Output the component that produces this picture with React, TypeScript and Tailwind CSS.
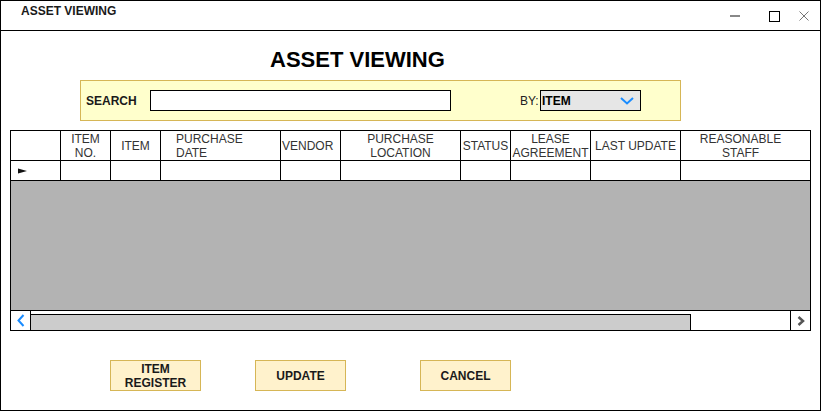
import React from "react";

const columns = [
  { w: "w-[50px]", label: [""], align: "items-center" },
  { w: "w-[50px]", label: ["ITEM", "NO."], align: "items-center" },
  { w: "w-[50px]", label: ["ITEM"], align: "items-center" },
  { w: "w-[120px]", label: ["PURCHASE", "DATE"], align: "items-start pl-[15px]" },
  { w: "w-[60px]", label: ["VENDOR"], align: "items-start pl-[1px]" },
  { w: "w-[120px]", label: ["PURCHASE", "LOCATION"], align: "items-center" },
  { w: "w-[50px]", label: ["STATUS"], align: "items-center" },
  { w: "w-[80px]", label: ["LEASE", "AGREEMENT"], align: "items-center" },
  { w: "w-[90px]", label: ["LAST UPDATE"], align: "items-center" },
  { w: "w-[129px]", label: ["REASONABLE", "STAFF"], align: "items-center pr-[10px]" },
];

function ActionButton({ lines, className }: { lines: string[]; className: string }) {
  return (
    <button
      className={`h-[31px] w-[91px] border border-[#d6b656] bg-[#fff2cc] text-[12px] font-bold leading-[14px] text-[#1a1a1a] flex flex-col items-center justify-center ${className}`}
    >
      {lines.map((l) => (
        <span key={l}>{l}</span>
      ))}
    </button>
  );
}

export default function App() {
  return (
    <div className="w-[821px] h-[411px] border border-black bg-white flex flex-col font-['Liberation_Sans',Arial,sans-serif] text-black">
      {/* title bar */}
      <div className="h-[30px] shrink-0 border-b border-black flex items-start">
        <span className="ml-[20px] pt-[3px] text-[12px] leading-[14px] font-bold text-[#1a1a1a]">ASSET VIEWING</span>
        <div className="ml-auto mt-[9px] flex items-start">
          <svg width="12" height="12" viewBox="0 0 12 12" className="mr-[27px]">
            <line x1="1" y1="6" x2="11" y2="6" stroke="#888" strokeWidth="2" />
          </svg>
          <svg width="12" height="12" viewBox="0 0 12 12" className="mr-[18px]">
            <rect x="1.5" y="1.5" width="10" height="10" fill="none" stroke="#000" strokeWidth="1" />
          </svg>
          <svg width="12" height="12" viewBox="0 0 12 12" className="mr-[10px]">
            <path d="M1.5 1.5 L10.5 10.5 M10.5 1.5 L1.5 10.5" stroke="#777" strokeWidth="1" />
          </svg>
        </div>
      </div>

      {/* heading */}
      <h1 className="mt-[17px] ml-[269px] text-[22px] leading-[24px] font-bold">ASSET VIEWING</h1>

      {/* search panel */}
      <div className="mt-[8px] ml-[79px] w-[601px] h-[41px] border border-[#d6b656] bg-[#ffffcc] flex items-center pl-[5px]">
        <span className="w-[64px] text-[12px] font-bold text-[#1a1a1a]">SEARCH</span>
        <input className="w-[301px] h-[21px] border border-black bg-white outline-none" />
        <span className="ml-[69px] w-[20px] text-[12px] text-[#222]">BY:</span>
        <div className="w-[101px] h-[21px] border border-black bg-[#e6e6e6] flex items-center pl-[1px]">
          <span className="text-[12px] font-bold">ITEM</span>
          <svg width="14" height="8" viewBox="0 0 14 8" className="ml-auto mr-[6px]">
            <path d="M1 1 L7 6.5 L13 1" fill="none" stroke="#1a8cff" strokeWidth="2" />
          </svg>
        </div>
      </div>

      {/* table */}
      <div className="mt-[9px] ml-[9px] w-[801px] border border-black flex flex-col">
        <div className="h-[30px] flex border-b border-black">
          {columns.map((c, i) => (
            <div
              key={i}
              className={`${c.w} ${i < columns.length - 1 ? "border-r border-black" : ""} flex flex-col justify-center text-[12px] leading-[14px] text-[#333] whitespace-nowrap ${c.align}`}
            >
              {c.label.map((l) => (
                <span key={l}>{l}</span>
              ))}
            </div>
          ))}
        </div>
        <div className="h-[20px] flex border-b border-black">
          {columns.map((c, i) => (
            <div key={i} className={`${c.w} ${i < columns.length - 1 ? "border-r border-black" : ""} flex items-center`}>
              {i === 0 && (
                <svg width="9" height="6" viewBox="0 0 9 6" className="ml-[7px]">
                  <polygon points="0,0.5 9,3 0,5.5" fill="#111" />
                </svg>
              )}
            </div>
          ))}
        </div>
        <div className="h-[130px] bg-[#b3b3b3] border-b border-black" />
        <div className="h-[19px] flex">
          <div className="w-[20px] border-r border-black flex items-center justify-center">
            <svg width="8" height="13" viewBox="0 0 8 13">
              <path d="M6.5 1 L1.5 6.5 L6.5 12" fill="none" stroke="#1a8cff" strokeWidth="2" />
            </svg>
          </div>
          <div className="w-[660px] mt-[3px] border-t border-r border-black bg-[#cccccc]" />
          <div className="flex-1" />
          <div className="w-[20px] border-l border-black flex items-center justify-center">
            <svg width="8" height="10" viewBox="0 0 8 10">
              <path d="M1.5 1 L6 5 L1.5 9" fill="none" stroke="#555" strokeWidth="2.5" />
            </svg>
          </div>
        </div>
      </div>

      {/* actions */}
      <div className="mt-[29px] flex">
        <ActionButton lines={["ITEM", "REGISTER"]} className="ml-[109px]" />
        <ActionButton lines={["UPDATE"]} className="ml-[54px]" />
        <ActionButton lines={["CANCEL"]} className="ml-[74px]" />
      </div>
    </div>
  );
}
